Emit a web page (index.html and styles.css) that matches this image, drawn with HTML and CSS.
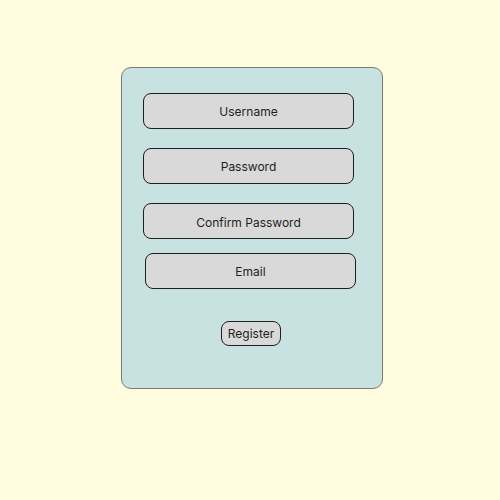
FILE: index.html
```html
<!DOCTYPE html>
<html lang="en">
<head>
    <meta charset="UTF-8">
    <title>Register</title>
    <link rel="stylesheet" href="styles.css">
</head>
<body>

    <div class="card">
        <div class="field">Username</div>
        <div class="field">Password</div>
        <div class="field field-confirm">Confirm Password</div>
        <div class="field field-email">Email</div>

        <div class="button-row">
            <button class="register-button">Register</button>
        </div>
    </div>

</body>
</html>
```

FILE: styles.css
```css
* {
    margin: 0;
    padding: 0;
    box-sizing: border-box;
}

body {
    font-family: 'Inter', sans-serif;
    background-color: #fffbdf;
    color: #1e1e1e;
    padding: 67px 0 0 121px;
    height: 500px;
}

.card {
    width: 262px;
    height: 322px;
    padding: 25px 27px 0 21px;
    background: #c8e2e2;
    border: 1px solid #7a7a72;
    border-radius: 10px;
    display: flex;
    flex-direction: column;
}

.field {
    height: 36px;
    width: 211px;
    display: flex;
    align-items: center;
    justify-content: center;
    font-size: 12px;
    background: #d9d9d9;
    border: 1px solid #1e1e1e;
    border-radius: 8px;
    margin-bottom: 19px;
}

.field-confirm {
    padding-top: 2px;
    margin-bottom: 14px;
}

.field-email {
    margin-left: 2px;
    margin-bottom: 32px;
}

.button-row {
    display: flex;
    justify-content: center;
    padding-left: 4px;
}

.register-button {
    width: 60px;
    height: 25px;
    font-family: 'Inter', sans-serif;
    font-size: 12px;
    color: #1e1e1e;
    background: #d9d9d9;
    border: 1px solid #1e1e1e;
    border-radius: 8px;
}
```
